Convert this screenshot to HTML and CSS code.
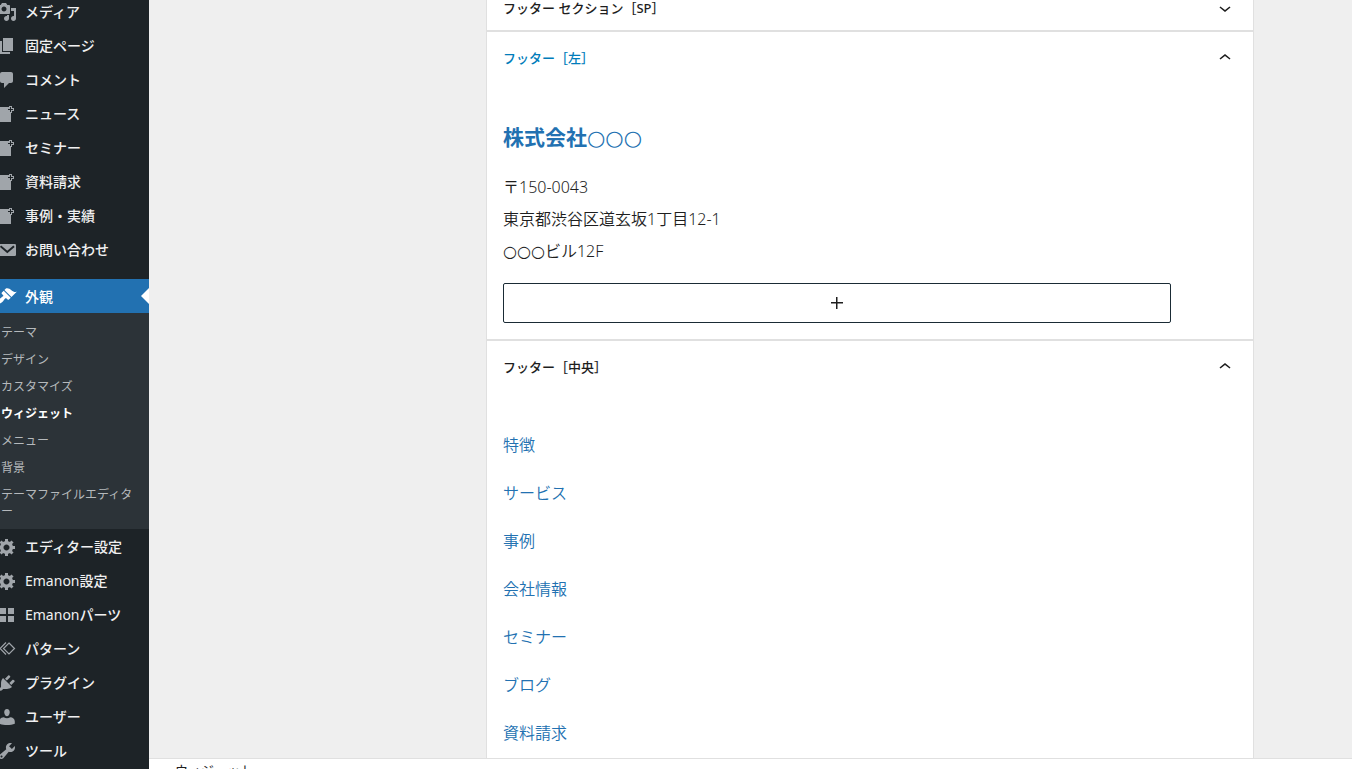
FILE: index.html
```html
<!DOCTYPE html>
<html lang="ja">
<head>
  <meta charset="UTF-8" />
  <meta name="viewport" content="width=device-width, initial-scale=1.0"/>
  <title>ウィジェット</title>
  <link rel="stylesheet" href="styles.css">
</head>
<body>
  <svg class="sprite" aria-hidden="true">
    <symbol id="i-page" viewBox="0 0 20 20"><path d="M17 7V4h-2V2h-3v1H3v15h11V9h1V7h2zm-1-2v1h-2v2h-1V6h-2V5h2V3h1v2h2z"/></symbol>
    <symbol id="i-gear" viewBox="0 0 20 20"><path d="M18 12h-2.18c-.17.7-.44 1.35-.81 1.93l1.54 1.54-2.1 2.1-1.54-1.54c-.58.36-1.23.63-1.91.79V19H8v-2.18c-.68-.16-1.33-.43-1.91-.79l-1.54 1.54-2.12-2.12 1.54-1.54c-.36-.58-.63-1.23-.79-1.91H1V9.03h2.17c.16-.7.44-1.35.8-1.94L2.43 5.55l2.1-2.1 1.54 1.54c.58-.37 1.24-.64 1.93-.81V2h3v2.18c.68.16 1.33.43 1.91.79l1.54-1.54 2.12 2.12-1.54 1.54c.36.59.64 1.24.8 1.94H18V12zm-8.5 1.5c1.66 0 3-1.34 3-3s-1.34-3-3-3-3 1.34-3 3 1.34 3 3 3z"/></symbol>
    <symbol id="i-up" viewBox="0 0 24 24"><path d="M6.5 12.4 12 8l5.5 4.4-.9 1.2L12 10l-4.5 3.6-1-1.2z"/></symbol>
    <symbol id="i-down" viewBox="0 0 24 24"><path d="M17.5 11.6 12 16l-5.5-4.4.9-1.2L12 14l4.5-3.6 1 1.2z"/></symbol>
  </svg>

  <div class="layout">
    <nav class="sidebar">
      <ul class="menu">
        <li><a href="#"><svg class="icon" viewBox="0 0 20 20"><path d="M13 11V4c0-.55-.45-1-1-1h-1.67L9 1H5L3.67 3H2c-.55 0-1 .45-1 1v7c0 .55.45 1 1 1h10c.55 0 1-.45 1-1zM7 4.5c1.38 0 2.5 1.12 2.5 2.5S8.38 9.5 7 9.5 4.5 8.38 4.5 7 5.62 4.5 7 4.5zM14 6h5v10.5c0 1.38-1.12 2.5-2.5 2.5S14 17.88 14 16.5s1.12-2.5 2.5-2.5c.17 0 .34.02.5.05V9h-3V6zm-4 8.05V13h2v3.5c0 1.38-1.12 2.5-2.5 2.5S7 17.88 7 16.5 8.12 14 9.5 14c.17 0 .34.02.5.05z"/></svg>メディア</a></li>
        <li><a href="#"><svg class="icon" viewBox="0 0 20 20"><path d="M6 15V2h10v13H6zm-1 1h8v2H3V5h2v11z"/></svg>固定ページ</a></li>
        <li><a href="#"><svg class="icon" viewBox="0 0 20 20"><path d="M5 2h9c1.1 0 2 .9 2 2v7c0 1.1-.9 2-2 2h-2l-5 5v-5H5c-1.1 0-2-.9-2-2V4c0-1.1.9-2 2-2z"/></svg>コメント</a></li>
        <li><a href="#"><svg class="icon"><use href="#i-page"/></svg>ニュース</a></li>
        <li><a href="#"><svg class="icon"><use href="#i-page"/></svg>セミナー</a></li>
        <li><a href="#"><svg class="icon"><use href="#i-page"/></svg>資料請求</a></li>
        <li><a href="#"><svg class="icon"><use href="#i-page"/></svg>事例・実績</a></li>
        <li><a href="#"><svg class="icon" viewBox="0 0 20 20"><rect x="1.5" y="4" width="17.5" height="12" rx="1.2"/><path class="cut" d="M3.5 6.2 10.3 12l6.7-5.8"/></svg>お問い合わせ</a></li>
        <li class="current">
          <a href="#"><svg class="icon" viewBox="0 0 20 20"><path d="M14.48 11.06L7.41 3.99l1.5-1.5c.5-.56 2.3-.47 3.51.32 1.21.8 1.43 1.28 2.91 2.1 1.18.64 2.45 1.26 4.45.85zm-.71.71L6.7 4.7 4.93 6.47c-.39.39-.39 1.02 0 1.41l1.06 1.06c.39.39.39 1.03 0 1.42-.6.6-1.43 1.11-2.21 1.69-.35.26-.7.53-1.01.84C1.43 14.23.4 16.08 1.4 17.07c.99 1 2.84-.03 4.18-1.36.31-.31.58-.66.85-1.02.57-.78 1.08-1.61 1.69-2.21.39-.39 1.02-.39 1.41 0l1.06 1.06c.39.39 1.02.39 1.41 0z"/></svg>外観</a>
          <ul class="submenu">
            <li><a href="#">テーマ</a></li>
            <li><a href="#">デザイン</a></li>
            <li><a href="#">カスタマイズ</a></li>
            <li><a href="#" class="selected">ウィジェット</a></li>
            <li><a href="#">メニュー</a></li>
            <li><a href="#">背景</a></li>
            <li><a href="#">テーマファイルエディター</a></li>
          </ul>
        </li>
        <li><a href="#"><svg class="icon"><use href="#i-gear"/></svg>エディター設定</a></li>
        <li><a href="#"><svg class="icon"><use href="#i-gear"/></svg><span><span class="latin">Emanon</span>設定</span></a></li>
        <li><a href="#"><svg class="icon" viewBox="0 0 20 20"><path d="M2 3h7v6H2zM11 3h6v6h-6zM2 11h7v6H2zM11 11h6v6h-6z"/></svg><span><span class="latin">Emanon</span>パーツ</span></a></li>
        <li><a href="#"><svg class="icon" viewBox="0 0 20 20"><path class="line" d="M12 4l5.5 5.5L12 15l-5.5-5.5zM9 3.5l-6 6 6 6"/></svg>パターン</a></li>
        <li><a href="#"><svg class="icon" viewBox="0 0 20 20"><path d="M13.11 4.36L9.87 7.6 8 5.73l3.24-3.24c.35-.34 1.05-.2 1.56.32.52.51.66 1.21.31 1.55zm-8 1.77l.91-1.12 9.01 9.01-1.19.84c-.71.71-2.63 1.16-3.82 1.16H6.14L4.9 17.26c-.59.59-1.54.59-2.12 0-.59-.58-.59-1.53 0-2.12l1.24-1.24v-3.88c0-1.13.4-3.19 1.09-3.89zm7.26 3.97l3.24-3.24c.34-.35 1.04-.21 1.55.31.52.51.66 1.21.31 1.55l-3.24 3.25z"/></svg>プラグイン</a></li>
        <li><a href="#"><svg class="icon" viewBox="0 0 20 20"><path d="M10 9.25c-2.27 0-2.73-3.44-2.73-3.44C7 4.02 7.82 2 9.97 2c2.16 0 2.98 2.02 2.71 3.81 0 0-.41 3.44-2.68 3.44zM6.8 10.3c1.9 1.3 4.5 1.3 6.4 0 2.6 0 4.6 2 4.6 4.2v2.2c-2 .9-4.8 1.4-7.8 1.4s-5.8-.5-7.8-1.4v-2.2c0-2.2 2-4.2 4.6-4.2z"/></svg>ユーザー</a></li>
        <li><a href="#"><svg class="icon" viewBox="0 0 20 20"><path d="M16.68 9.77c-1.34 1.34-3.3 1.67-4.95.99l-5.41 6.52c-.99.99-2.59.99-3.58 0s-.99-2.59 0-3.57l6.52-5.42c-.68-1.65-.35-3.61.99-4.95 1.28-1.28 3.12-1.62 4.72-1.06l-2.89 2.89 2.82 2.82 2.86-2.87c.53 1.58.18 3.39-1.08 4.65zM3.81 16.21c.4.39 1.04.39 1.43 0 .4-.4.4-1.04 0-1.43-.39-.4-1.03-.4-1.43 0-.39.39-.39 1.03 0 1.43z"/></svg>ツール</a></li>
      </ul>
    </nav>

    <div class="content">
      <main class="editor">
        <div class="areas">
          <section class="area">
            <button class="area-title closed" type="button">フッター セクション［SP］<svg class="chevron"><use href="#i-down"/></svg></button>
          </section>

          <section class="area">
            <button class="area-title active" type="button">フッター［左］<svg class="chevron"><use href="#i-up"/></svg></button>
            <div class="area-body">
              <h2><a href="#">株式会社<span class="circle">○○○</span></a></h2>
              <p>〒150-0043<br>東京都渋谷区道玄坂1丁目12-1<br><span class="circle">○○○</span>ビル12F</p>
              <button class="add-block" type="button" aria-label="ブロックを追加">
                <svg viewBox="0 0 24 24"><path d="M11 12.5V18h1.5v-5.5H18V11h-5.5V6H11v5H6v1.5z"/></svg>
              </button>
            </div>
          </section>

          <section class="area">
            <button class="area-title" type="button">フッター［中央］<svg class="chevron"><use href="#i-up"/></svg></button>
            <div class="area-body">
              <ul class="links">
                <li><a href="#">特徴</a></li>
                <li><a href="#">サービス</a></li>
                <li><a href="#">事例</a></li>
                <li><a href="#">会社情報</a></li>
                <li><a href="#">セミナー</a></li>
                <li><a href="#">ブログ</a></li>
                <li><a href="#">資料請求</a></li>
              </ul>
            </div>
          </section>
        </div>
      </main>
      <footer class="breadcrumb">ウィジェット</footer>
    </div>
  </div>
</body>
</html>
```
FILE: styles.css
```css
* {
  box-sizing: border-box;
}
body {
  margin: 0;
  font-family: "Noto Sans", "Noto Sans CJK JP", sans-serif;
  background: #efefef;
  color: #1e1e1e;
}
ul {
  list-style: none;
  margin: 0;
  padding: 0;
}
a {
  text-decoration: none;
}
.sprite {
  display: none;
}
.layout {
  display: flex;
  height: 100vh;
  overflow: hidden;
}

/* admin menu */
.sidebar {
  flex: none;
  width: 149px;
  background: #1d2327;
  overflow: hidden;
}
.menu {
  margin-top: -6px;
}
.menu > li > a {
  display: flex;
  align-items: center;
  gap: 8px;
  height: 34px;
  color: #f0f0f1;
  font-size: 14px;
  font-weight: 500;
  white-space: nowrap;
}
.latin {
  font-weight: 400;
}
.icon {
  flex: none;
  width: 20px;
  height: 20px;
  margin: 2px 0 0 -3px;
  fill: #a0a5aa;
}
.icon .cut {
  fill: none;
  stroke: #1d2327;
  stroke-width: 2;
}
.icon .line {
  fill: none;
  stroke: #a0a5aa;
  stroke-width: 1.2;
}
.menu .current {
  margin-top: 13px;
}
.menu > .current > a {
  position: relative;
  background: #2271b1;
  color: #fff;
}
.current > a .icon {
  margin-top: 0;
  fill: #fff;
}
.current > a::after {
  content: "";
  position: absolute;
  right: 0;
  top: 9px;
  border: 8px solid transparent;
  border-left: 0;
  border-right-color: #fff;
}
.submenu {
  padding: 6px 12px 4px 1px;
  background: #2c3338;
}
.submenu a {
  display: block;
  padding: 5px 0;
  color: #b5b9bc;
  font-size: 12px;
  line-height: 17px;
  word-break: break-all;
  line-break: anywhere;
}
.submenu .selected {
  color: #fff;
  font-weight: 700;
}

/* widget areas */
.content {
  flex: 1;
  display: flex;
  flex-direction: column;
  min-width: 0;
}
.editor {
  flex: 1;
  min-height: 0;
  padding: 0 98px 0 337px;
  overflow: hidden;
}
.areas {
  margin-top: -15px;
}
.area {
  background: #fff;
  border: 1px solid #e0e0e0;
}
.area-title {
  display: flex;
  align-items: center;
  justify-content: space-between;
  width: 100%;
  height: 52px;
  padding: 0 16px 2px;
  border: 0;
  background: none;
  color: #1e1e1e;
  font-family: inherit;
  font-size: 13px;
  font-weight: 500;
}
.area-title.closed {
  height: 44px;
}
.area-title.active {
  color: #007cba;
}
.chevron {
  width: 24px;
  height: 24px;
  margin-top: 2px;
  fill: #1e1e1e;
}
.area-body {
  padding: 28px 82px 16px 16px;
  font-size: 16px;
  font-weight: 350;
  line-height: 32px;
}
.area-body a {
  color: #2271b1;
}
.area-body h2 {
  margin: 0 0 9px;
  font-size: 21px;
  line-height: 50px;
}
.area-body p {
  margin: 0 0 16px;
}
.circle {
  font-family: "DejaVu Sans", sans-serif;
  font-weight: 400;
  line-height: 1;
}
.add-block {
  display: flex;
  align-items: center;
  justify-content: center;
  width: 100%;
  height: 40px;
  padding: 0;
  border: 1px solid #1a2b35;
  border-radius: 2px;
  background: #fff;
}
.add-block svg {
  width: 24px;
  height: 24px;
  fill: #1e1e1e;
}
.links li {
  line-height: 48px;
}

.breadcrumb {
  flex: none;
  height: 11px;
  padding-left: 26px;
  overflow: hidden;
  background: #fff;
  border-top: 1px solid #e0e0e0;
  font-size: 13px;
  line-height: 22px;
}
```
